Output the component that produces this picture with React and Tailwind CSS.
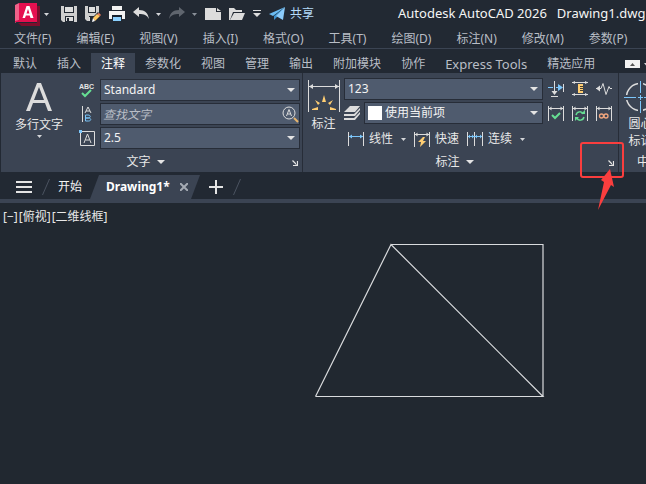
import React from "react";

const MENUS = [
  "文件(F)", "编辑(E)", "视图(V)", "插入(I)", "格式(O)",
  "工具(T)", "绘图(D)", "标注(N)", "修改(M)", "参数(P)",
];
const TABS = [
  "默认", "插入", "注释", "参数化", "视图", "管理",
  "输出", "附加模块", "协作", "Express Tools", "精选应用",
];

function Icon({ w = 16, h = 16, className = "", children }) {
  return (
    <svg width={w} height={h} viewBox={`0 0 ${w} ${h}`} fill="none" aria-hidden="true" className={`shrink-0 ${className}`}>
      {children}
    </svg>
  );
}

function Caret({ small = false, className = "" }) {
  return small ? (
    <Icon w={5} h={3} className={className}><path d="M0 0h5L2.5 3z" fill="#d4d6d9" /></Icon>
  ) : (
    <Icon w={8} h={4} className={className}><path d="M0 0h8L4 4z" fill="#e4e4e4" /></Icon>
  );
}

function IconButton({ label, className = "", children }) {
  return (
    <button type="button" aria-label={label} className={`flex shrink-0 items-center justify-center ${className}`}>
      {children}
    </button>
  );
}

function Combo({ label, value, swatch = false }) {
  return (
    <div className="relative flex h-[22px] min-w-0 flex-1 items-center border border-[#272d38] bg-[#4f5b6e]">
      {swatch && <span className="ml-[3px] size-[14px] shrink-0 bg-white" />}
      <select aria-label={label} className="h-full w-full appearance-none bg-transparent pr-4 pl-[3px] text-[12px] text-[#f3f3f3] outline-none">
        <option>{value}</option>
      </select>
      <Caret className="pointer-events-none absolute top-2 right-1" />
    </div>
  );
}

function PanelFooter({ title }) {
  return (
    <div className="relative flex h-5 items-center justify-center pr-3">
      <button type="button" className="flex items-center gap-[6px]">
        {title}
        <Caret />
      </button>
      <button type="button" aria-label={`${title}设置`} className="absolute top-[8px] right-1">
        <Icon w={6} h={6}>
          <path d="M0.5 0.5 4.5 4.5M5.5 1v4.5H1" stroke="#e4e4e4" strokeWidth="1.2" />
        </Icon>
      </button>
    </div>
  );
}

function Dim({ children, mid = "#dcdcdc" }) {
  return (
    <Icon>
      <path d="M0.5 1v15M15.5 1v15" stroke="#dcdcdc" />
      <path d="M1 3.5h14" stroke={mid} />
      <path d="M1 3.5l2.5-2v4zM15 3.5l-2.5-2v4z" fill={mid} />
      {children}
    </Icon>
  );
}

function TitleBar() {
  return (
    <header className="flex h-7 items-center overflow-hidden whitespace-nowrap">
      <IconButton label="应用程序菜单" className="ml-[15px] gap-1">
        <Icon w={25} h={24}>
          <path d="M3 21h19V4h1.500v20.500H7z" fill="#7d0d2c" />
          <path d="M22 4h3v20H7l-3-3h18z" fill="#7d0d2c" />
          <path d="M0 3 4 1v17l-4 3z" fill="#f0628a" />
          <path d="M4 1h18v19H0v-1l4-1z" fill="#e51050" />
          <path d="M11.500 4h3l4 12h-3l-.8-2.500h-3.800L10 16H7.500zM13 7 11.500 11.500h3z" fill="#fff" />
        </Icon>
        <Caret small className="mt-px" />
      </IconButton>
      <IconButton label="保存" className="ml-3">
        <Icon>
          <path d="M0 0h16v16H2l-2-2z" fill="#cfcfcf" />
          <path d="M3 0h10v7H3zM4 10h9v6H4z" fill="#222933" />
          <path d="M4 1h8v5H4zM5 11h7v4H5z" fill="#dedede" />
          <path d="M6 12h2v3H6z" fill="#222933" />
        </Icon>
      </IconButton>
      <IconButton label="另存为" className="ml-2">
        <Icon>
          <path d="M0 0h14v7l-7 8H2l-2-2z" fill="#cfcfcf" />
          <path d="M3 0h8v7H3zM4 10h5v6H4z" fill="#222933" />
          <path d="M4 1h6v5H4zM4 11h1v4H4z" fill="#dedede" />
          <path d="M7 12 13 6l3 3-7 7H6z" fill="#222933" />
          <path d="m8 12 4-4 3 2-5 5z" fill="#ffc861" />
          <path d="m12 8 2-1 2 2-1 1z" fill="#f07c5b" />
          <path d="m8 12 2 3-3 1z" fill="#fff" />
        </Icon>
      </IconButton>
      <IconButton label="打印" className="ml-2">
        <Icon>
          <path d="M3 0h10v4H3zM0 5h16v8h-3V9H3v4H0z" fill="#f2f2f2" />
          <path d="M3 9h10v2H3z" fill="#16202c" />
          <path d="M4 11h8v4H4z" fill="#8bd0ff" />
        </Icon>
      </IconButton>
      <IconButton label="放弃" className="ml-2 gap-[7px]">
        <Icon><path d="M0 6 6 1v3c6 0 9 3 10 9-2-4-5-5-10-5v3z" fill="#dcdcdc" /></Icon>
        <Caret small />
      </IconButton>
      <IconButton label="重做" className="ml-2 gap-[7px]">
        <Icon><path d="M16 6 10 1v3C4 4 1 7 0 13c2-4 5-5 10-5v3z" fill="#5f656e" /></Icon>
        <Icon w={5} h={3}><path d="M0 0h5L2.500 3z" fill="#8a9099" /></Icon>
      </IconButton>
      <IconButton label="新建" className="ml-2">
        <Icon><path d="M0 2h11v4h5v8H0zM12 2l4 3h-4z" fill="#dcdcdc" /></Icon>
      </IconButton>
      <IconButton label="打开" className="ml-2">
        <Icon>
          <path d="M0 14V2h5l2 2h6v2H4L1 14z" fill="#dcdcdc" />
          <path d="M5 7h11l-3 7H1z" fill="#dcdcdc" />
        </Icon>
      </IconButton>
      <IconButton label="自定义快速访问工具栏" className="ml-2">
        <Icon w={8} h={8}><path d="M0 0h8v1H0zM0 3h8L4 7z" fill="#dcdcdc" /></Icon>
      </IconButton>
      <button type="button" className="ml-2 flex shrink-0 items-center gap-[5px] text-[12px] text-[#b5dcfb]">
        <Icon>
          <path d="M16 1 0 8l4 2z" fill="#6bbcf3" />
          <path d="M16 1 5 10v4l3-3z" fill="#3c92cf" />
          <path d="M16 1 7 10l7 4z" fill="#8ccbfa" />
        </Icon>
        共享
      </button>
      <h1 className="ml-[84px] flex gap-[10px] text-[13px] text-[#f5f5f5]">
        <span>Autodesk AutoCAD 2026</span>
        <span>Drawing1.dwg</span>
      </h1>
    </header>
  );
}

function TextPanel() {
  return (
    <section className="flex w-[302px] shrink-0 flex-col justify-between border-r border-[#272d38] pt-[6px]">
      <div className="flex">
        <button type="button" className="flex w-[76px] shrink-0 flex-col items-center">
          <Icon w={26} h={28} className="mt-1">
            <path d="M0 28 11 0h4l11 28h-4l-3-8H7l-3 8zM8 17h10L13 4z" fill="#dcdcdc" />
          </Icon>
          <span className="mt-1 leading-5">多行文字</span>
          <Caret small />
        </button>
        <div className="flex min-w-0 flex-1 flex-col gap-[2px] pr-[2px] pl-[2px]">
          <div className="flex items-center gap-[5px]">
            <IconButton label="拼写检查">
              <Icon>
                <text x="0" y="7" fill="#e4e4e4" fontFamily="Liberation Sans, sans-serif" fontSize="7" fontWeight="bold">ABC</text>
                <path d="m3 11 3 3 6-6" stroke="#66de93" strokeWidth="2" />
              </Icon>
            </IconButton>
            <Combo label="文字样式" value="Standard" />
          </div>
          <div className="flex items-center gap-[5px]">
            <IconButton label="对齐文字">
              <Icon>
                <path d="M3.500 0v16" stroke="#dcdcdc" />
                <path d="m6 7 3-6 3 6M7 5h4" stroke="#dcdcdc" />
                <path d="M6.500 9v6h3c3 0 3-3 0-3h-3 2.500c3 0 3-3 0-3z" stroke="#7cc6fa" />
              </Icon>
            </IconButton>
            <div className="flex h-[22px] min-w-0 flex-1 items-center border border-[#272d38] bg-[#4f5b6e]">
              <input aria-label="查找文字" placeholder="查找文字" className="h-full min-w-0 flex-1 bg-transparent pl-[2px] text-[12px] italic outline-none placeholder:text-[#b9bec6]" />
              <IconButton label="查找">
                <Icon w={18} h={18}>
                  <circle cx="8" cy="8" r="6" stroke="#dcdcdc" />
                  <path d="m5.500 11 2.500-6.500 2.500 6.500M6.500 9h3" stroke="#dcdcdc" />
                  <path d="m13 13 4 4" stroke="#e8b56c" strokeWidth="2" />
                </Icon>
              </IconButton>
            </div>
          </div>
          <div className="flex items-center gap-[5px]">
            <IconButton label="文字高度">
              <Icon>
                <path d="M1.500 1.500h14v14h-14z" stroke="#dcdcdc" />
                <path d="m5 13 3.500-9L12 13M6.500 10h4" stroke="#dcdcdc" />
                <path d="M0 0h3v3H0z" fill="#7cc6fa" />
              </Icon>
            </IconButton>
            <Combo label="高度" value="2.5" />
          </div>
        </div>
      </div>
      <PanelFooter title="文字" />
    </section>
  );
}

function DimensionPanel() {
  return (
    <section className="relative flex w-[316px] shrink-0 flex-col justify-between border-r border-[#272d38] pt-[5px]">
      <div className="flex">
        <button type="button" className="flex w-[41px] shrink-0 flex-col items-center">
          <Icon w={32} h={33} className="mt-[2px]">
            <path d="M.5 0v32M31.500 0v32M1 6.500h30" stroke="#dcdcdc" />
            <path d="m1 6.500 4-2.500v5zM31 6.500 27 4v5z" fill="#dcdcdc" />
            <path d="m16 15 2 7h-4zM7 20l5 3-2 2zM25 20l-5 3 2 2zM4 29l6-2v3H4zM28 29l-6-2v3h6z" fill="#ffce73" />
          </Icon>
          <span className="leading-[22px]">标注</span>
        </button>
        <div className="flex min-w-0 flex-1 flex-col gap-[2px]">
          <div className="flex items-center gap-[5px]">
            <Combo label="标注样式" value="123" />
            <div className="flex gap-2 pr-[6px]">
              <IconButton label="折断">
                <Icon>
                  <path d="M6.500 0v13M3 15.500h7M15.500 3v8" stroke="#dcdcdc" />
                  <path d="m3.500 10 3 4 3-4z" fill="#dcdcdc" />
                  <path d="M0 6.500h5M8 6.500h5" stroke="#7cc6fa" />
                  <path d="m10 3 5 3.500-5 3.500z" fill="#7cc6fa" />
                </Icon>
              </IconButton>
              <IconButton label="调整间距">
                <Icon>
                  <path d="M0 1.500h16M0 13.500h16" stroke="#dcdcdc" />
                  <path d="m0 1.500 3-1.500v3zM16 1.500 13 0v3zM0 13.500 3 12v3zM16 13.500 13 12v3z" fill="#dcdcdc" />
                  <path d="M6 3h5v9H6z" fill="#ffce73" />
                  <path d="M8 5.500h3M8 7.500h3M8 9.500h3" stroke="#4b412e" />
                </Icon>
              </IconButton>
              <IconButton label="折弯标注">
                <Icon>
                  <path d="M0 7.500h5l2-5 3 11 3-8 1 2h2" stroke="#dcdcdc" />
                  <path d="m0 7.500 4-3v6z" fill="#dcdcdc" />
                </Icon>
              </IconButton>
            </div>
          </div>
          <div className="flex items-center gap-[5px]">
            <div className="flex min-w-0 flex-1 items-center gap-1">
              <IconButton label="图层">
                <Icon>
                  <path d="M6 1h10l-5 6H0zM0 9h10l6-6v2l-5 6H0zM0 13h10l6-6v2l-5 6H0z" fill="#dcdcdc" />
                </Icon>
              </IconButton>
              <Combo label="标注图层" value="使用当前项" swatch />
            </div>
            <div className="flex gap-2 pr-[6px]">
              <IconButton label="检验">
                <Dim><path d="m4 10 3 3 5-5" stroke="#66de93" strokeWidth="2" /></Dim>
              </IconButton>
              <IconButton label="更新">
                <Dim>
                  <path d="M4 10c1-4 6-4 7-1M12 12c-1 4-6 4-7 1" stroke="#66de93" strokeWidth="1.500" />
                  <path d="M9 9h4V5zM3 16v-4h4z" fill="#66de93" />
                </Dim>
              </IconButton>
              <IconButton label="重新关联">
                <Dim>
                  <circle cx="5.500" cy="11" r="2" stroke="#f2a67e" strokeWidth="1.300" />
                  <circle cx="10" cy="11" r="2" stroke="#f2a67e" strokeWidth="1.300" />
                </Dim>
              </IconButton>
            </div>
          </div>
          <div className="flex h-[26px] items-center gap-2 pl-1">
            <button type="button" className="flex items-center gap-[5px]">
              <Icon>
                <path d="M.5 1v14M15.500 1v14" stroke="#dcdcdc" />
                <path d="M1 5.500h14" stroke="#7cc6fa" />
                <path d="m1 5.500 3-2v4zM15 5.500l-3-2v4z" fill="#7cc6fa" />
              </Icon>
              线性
              <Caret small className="ml-[3px]" />
            </button>
            <button type="button" className="flex items-center gap-[5px]">
              <Dim><path d="m9 6-5 5h3l-1 5 6-6H9l2-4z" fill="#ffce73" /></Dim>
              快速
            </button>
            <button type="button" className="flex items-center gap-[5px]">
              <Icon>
                <path d="M.5 1v14M7.500 1v14M15.500 1v14" stroke="#dcdcdc" />
                <path d="M1 5.500h14" stroke="#7cc6fa" />
                <path d="m1 5.500 2-2v4zM7 5.500l-2-2v4zM8 5.500l2-2v4zM15 5.500l-2-2v4z" fill="#7cc6fa" />
              </Icon>
              连续
              <Caret small className="ml-[3px]" />
            </button>
          </div>
        </div>
      </div>
      <PanelFooter title="标注" />
      <svg width="46" height="72" viewBox="0 0 46 72" fill="none" aria-hidden="true" className="pointer-events-none absolute top-[68px] -right-[7px]">
        <rect x="2" y="2" width="42" height="34" rx="2" stroke="#fa3e3e" strokeWidth="2" />
        <path d="m31 28-9 11 3 2-6 28 13-25 3 2z" fill="#fa3e3e" />
      </svg>
    </section>
  );
}

function CenterPanel() {
  return (
    <section className="flex w-[42px] shrink-0 flex-col items-center justify-between pt-2">
      <button type="button" className="flex flex-col items-center">
        <Icon w={32} h={32}>
          <circle cx="16" cy="16" r="13.500" stroke="#dcdcdc" strokeWidth="1.500" />
          <path d="M16.500 0v32M0 16.500h32" stroke="#3b4453" strokeWidth="5" />
          <path d="M16.500 0v12M16.500 20v12M0 16.500h12M20 16.500h12M14 16.500h5M16.500 14v5" stroke="#7cc6fa" />
        </Icon>
        <span className="mt-[2px] pl-px text-center leading-[17px]">圆心<br />标记</span>
      </button>
      <div className="flex h-5 items-center self-start pl-[18px]">中</div>
    </section>
  );
}

function FileTabs() {
  const slash = (
    <Icon w={8} h={16}><path d="M7.500 0 .5 16" stroke="#4b5360" /></Icon>
  );
  return (
    <nav aria-label="文件选项卡" className="flex h-[31px] items-center border-b-4 border-[#3b4453] bg-[#222933] pt-[3px]">
      <IconButton label="文件列表" className="ml-4">
        <Icon w={16} h={12}><path d="M0 1h16M0 6h16M0 11h16" stroke="#e4e4e4" strokeWidth="2" /></Icon>
      </IconButton>
      <span className="ml-[10px]">{slash}</span>
      <button type="button" className="ml-2 text-[#f3f3f3]">开始</button>
      <div className="ml-2 flex h-6 w-[110px] items-center bg-[#3b4453] pl-4 [clip-path:polygon(9px_0,100%_0,calc(100%_-_9px)_100%,0_100%)]">
        <button type="button" className="text-[12px] font-bold text-white">Drawing1*</button>
        <IconButton label="关闭" className="ml-[10px]">
          <Icon w={8} h={8}><path d="m0 0 8 8M8 0 0 8" stroke="#a4aab3" strokeWidth="2" /></Icon>
        </IconButton>
      </div>
      <IconButton label="新图形" className="ml-[9px]">
        <Icon w={14} h={14}><path d="M7 0v14M0 7h14" stroke="#e4e4e4" strokeWidth="2" /></Icon>
      </IconButton>
      <span className="ml-[10px]">{slash}</span>
    </nav>
  );
}

export default function App() {
  return (
    <div className="flex min-h-screen flex-col overflow-hidden bg-[#222933] font-['Noto_Sans','Noto_Sans_CJK_SC',sans-serif] text-[12px] text-[#e8e8e8]">
      <TitleBar />
      <nav aria-label="菜单栏" className="flex h-[21px] items-center gap-[25px] overflow-hidden border-b border-[#3b4453] pt-[2px] pl-[14px] whitespace-nowrap text-[#b9bec6]">
        {MENUS.map((m) => <button type="button" key={m} className="shrink-0">{m}</button>)}
      </nav>
      <div className="flex h-6 items-end overflow-hidden pl-[3px] whitespace-nowrap text-[#b9bec6]">
        {TABS.map((t) => (
          <button
            type="button"
            key={t}
            aria-pressed={t === "注释"}
            className={`h-5 shrink-0 px-[10px] pt-[2px] ${t === "注释" ? "bg-[#3b4453] text-white" : ""} ${t === "Express Tools" ? "text-[13px]" : ""}`}
          >
            {t}
          </button>
        ))}
        <IconButton label="最小化功能区" className="mb-[5px] ml-5 gap-1">
          <Icon w={15} h={8}><path d="M0 0h15v8H0z" fill="#f2f2f2" /><path d="M5 6h5L7.500 3z" fill="#555" /></Icon>
          <Caret small />
        </IconButton>
      </div>
      <div className="relative z-10 ml-px flex h-[99px] bg-[#3b4453] whitespace-nowrap">
        <TextPanel />
        <DimensionPanel />
        <CenterPanel />
      </div>
      <FileTabs />
      <main className="relative flex-1 bg-[#212830]">
        <svg className="block h-[281px] w-full" fill="none" role="img" aria-label="图形">
          <path d="M391 41.500h152v152M315.500 193.500h227.500L391 41.500l-75.500 152" stroke="#d9dbdd" strokeWidth="1.200" />
        </svg>
        <div className="absolute top-[5px] left-[3px] flex gap-px text-[12px] text-[#e8e8e8]">
          <button type="button">[−]</button>
          <button type="button">[俯视]</button>
          <button type="button">[二维线框]</button>
        </div>
      </main>
    </div>
  );
}
